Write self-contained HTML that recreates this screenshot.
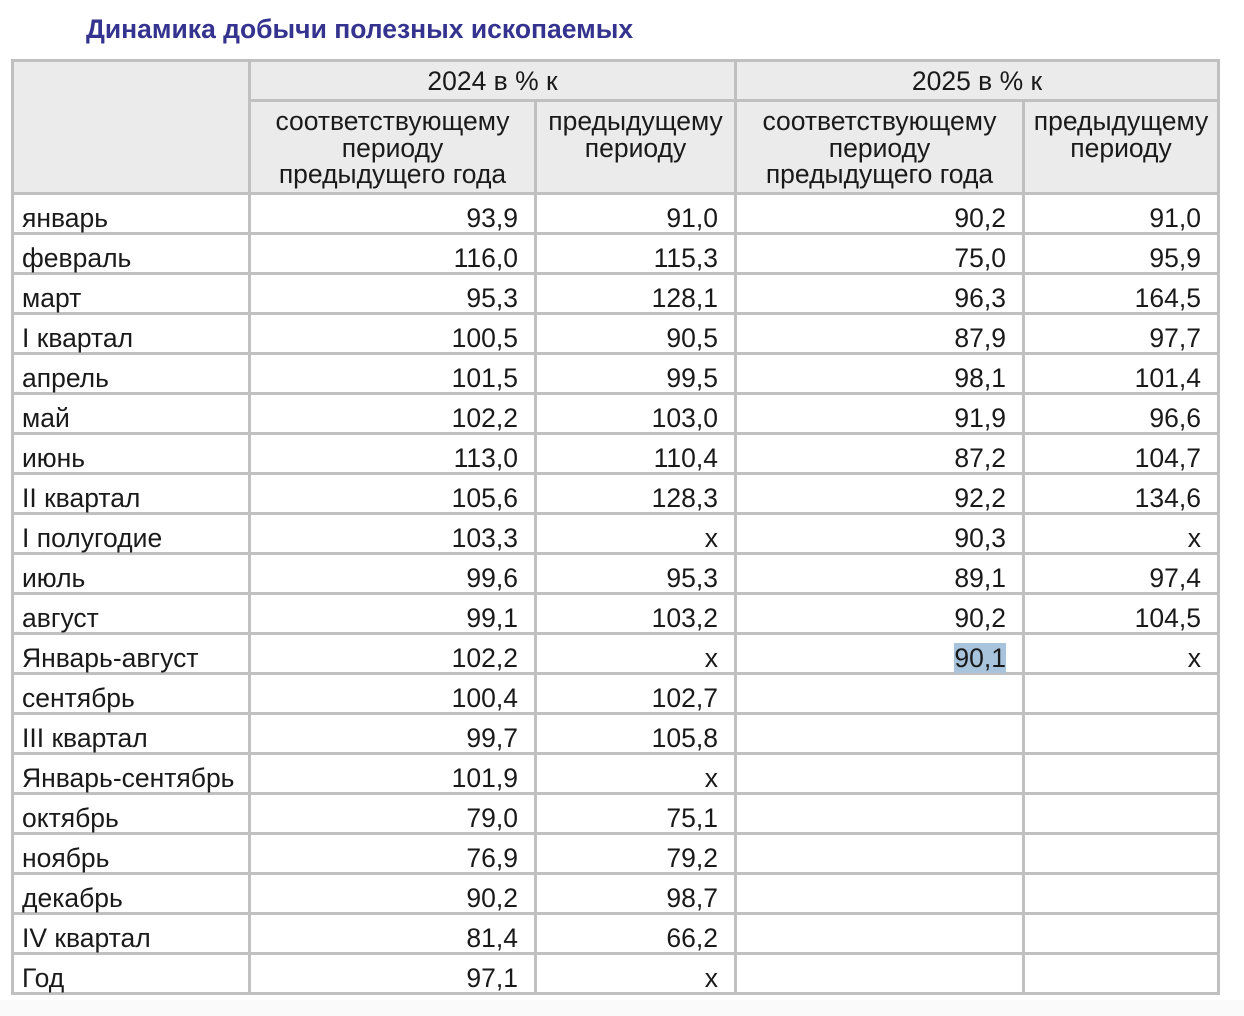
<!DOCTYPE html>
<html><head><meta charset="utf-8"><style>
body{margin:0;background:#fff;width:1244px;height:1016px;position:relative;overflow:hidden;font-family:"Liberation Sans",Arial,sans-serif;color:#1a1a1a}
.bot{position:absolute;left:0;top:1000px;width:1244px;height:16px;background:#fafafa}
h1{position:absolute;left:86px;top:14px;margin:0;font-size:26.5px;font-weight:bold;color:#34338f}
table{position:absolute;left:11px;top:59px;border-collapse:collapse;table-layout:fixed;width:1206px;font-size:26.5px}
td{border:3px solid #c0c0c0;padding:0;height:37px;vertical-align:bottom;padding-bottom:0;line-height:28px;white-space:nowrap}
thead td{background:#ebebeb;text-align:center;vertical-align:top;line-height:26.5px}
td.n{text-align:right;padding-right:16px}
td.l{padding-left:8px}
.sel{background:#a8c4dc}
</style></head><body>
<h1>Динамика добычи полезных ископаемых</h1>
<table>
<colgroup><col style="width:237px"><col style="width:286px"><col style="width:200px"><col style="width:288px"><col style="width:195px"></colgroup>
<thead>
<tr><td rowspan="2"></td><td colspan="2" style="padding-top:6px;line-height:27px;height:31px">2024 в % к</td><td colspan="2" style="padding-top:6px;line-height:27px;height:31px">2025 в % к</td></tr>
<tr><td style="height:84px;padding-top:6px">соответствующему<br>периоду<br>предыдущего года</td><td style="padding-top:6px">предыдущему<br>периоду</td><td style="padding-top:6px">соответствующему<br>периоду<br>предыдущего года</td><td style="padding-top:6px">предыдущему<br>периоду</td></tr>
</thead>
<tbody>
<tr><td class="l">январь</td><td class="n">93,9</td><td class="n">91,0</td><td class="n">90,2</td><td class="n">91,0</td></tr>
<tr><td class="l">февраль</td><td class="n">116,0</td><td class="n">115,3</td><td class="n">75,0</td><td class="n">95,9</td></tr>
<tr><td class="l">март</td><td class="n">95,3</td><td class="n">128,1</td><td class="n">96,3</td><td class="n">164,5</td></tr>
<tr><td class="l">I квартал</td><td class="n">100,5</td><td class="n">90,5</td><td class="n">87,9</td><td class="n">97,7</td></tr>
<tr><td class="l">апрель</td><td class="n">101,5</td><td class="n">99,5</td><td class="n">98,1</td><td class="n">101,4</td></tr>
<tr><td class="l">май</td><td class="n">102,2</td><td class="n">103,0</td><td class="n">91,9</td><td class="n">96,6</td></tr>
<tr><td class="l">июнь</td><td class="n">113,0</td><td class="n">110,4</td><td class="n">87,2</td><td class="n">104,7</td></tr>
<tr><td class="l">II квартал</td><td class="n">105,6</td><td class="n">128,3</td><td class="n">92,2</td><td class="n">134,6</td></tr>
<tr><td class="l">I полугодие</td><td class="n">103,3</td><td class="n">x</td><td class="n">90,3</td><td class="n">x</td></tr>
<tr><td class="l">июль</td><td class="n">99,6</td><td class="n">95,3</td><td class="n">89,1</td><td class="n">97,4</td></tr>
<tr><td class="l">август</td><td class="n">99,1</td><td class="n">103,2</td><td class="n">90,2</td><td class="n">104,5</td></tr>
<tr><td class="l">Январь-август</td><td class="n">102,2</td><td class="n">x</td><td class="n"><span class="sel">90,1</span></td><td class="n">x</td></tr>
<tr><td class="l">сентябрь</td><td class="n">100,4</td><td class="n">102,7</td><td></td><td></td></tr>
<tr><td class="l">III квартал</td><td class="n">99,7</td><td class="n">105,8</td><td></td><td></td></tr>
<tr><td class="l">Январь-сентябрь</td><td class="n">101,9</td><td class="n">x</td><td></td><td></td></tr>
<tr><td class="l">октябрь</td><td class="n">79,0</td><td class="n">75,1</td><td></td><td></td></tr>
<tr><td class="l">ноябрь</td><td class="n">76,9</td><td class="n">79,2</td><td></td><td></td></tr>
<tr><td class="l">декабрь</td><td class="n">90,2</td><td class="n">98,7</td><td></td><td></td></tr>
<tr><td class="l">IV квартал</td><td class="n">81,4</td><td class="n">66,2</td><td></td><td></td></tr>
<tr><td class="l">Год</td><td class="n">97,1</td><td class="n">x</td><td></td><td></td></tr>
</tbody></table>
<div class="bot"></div>
</body></html>
